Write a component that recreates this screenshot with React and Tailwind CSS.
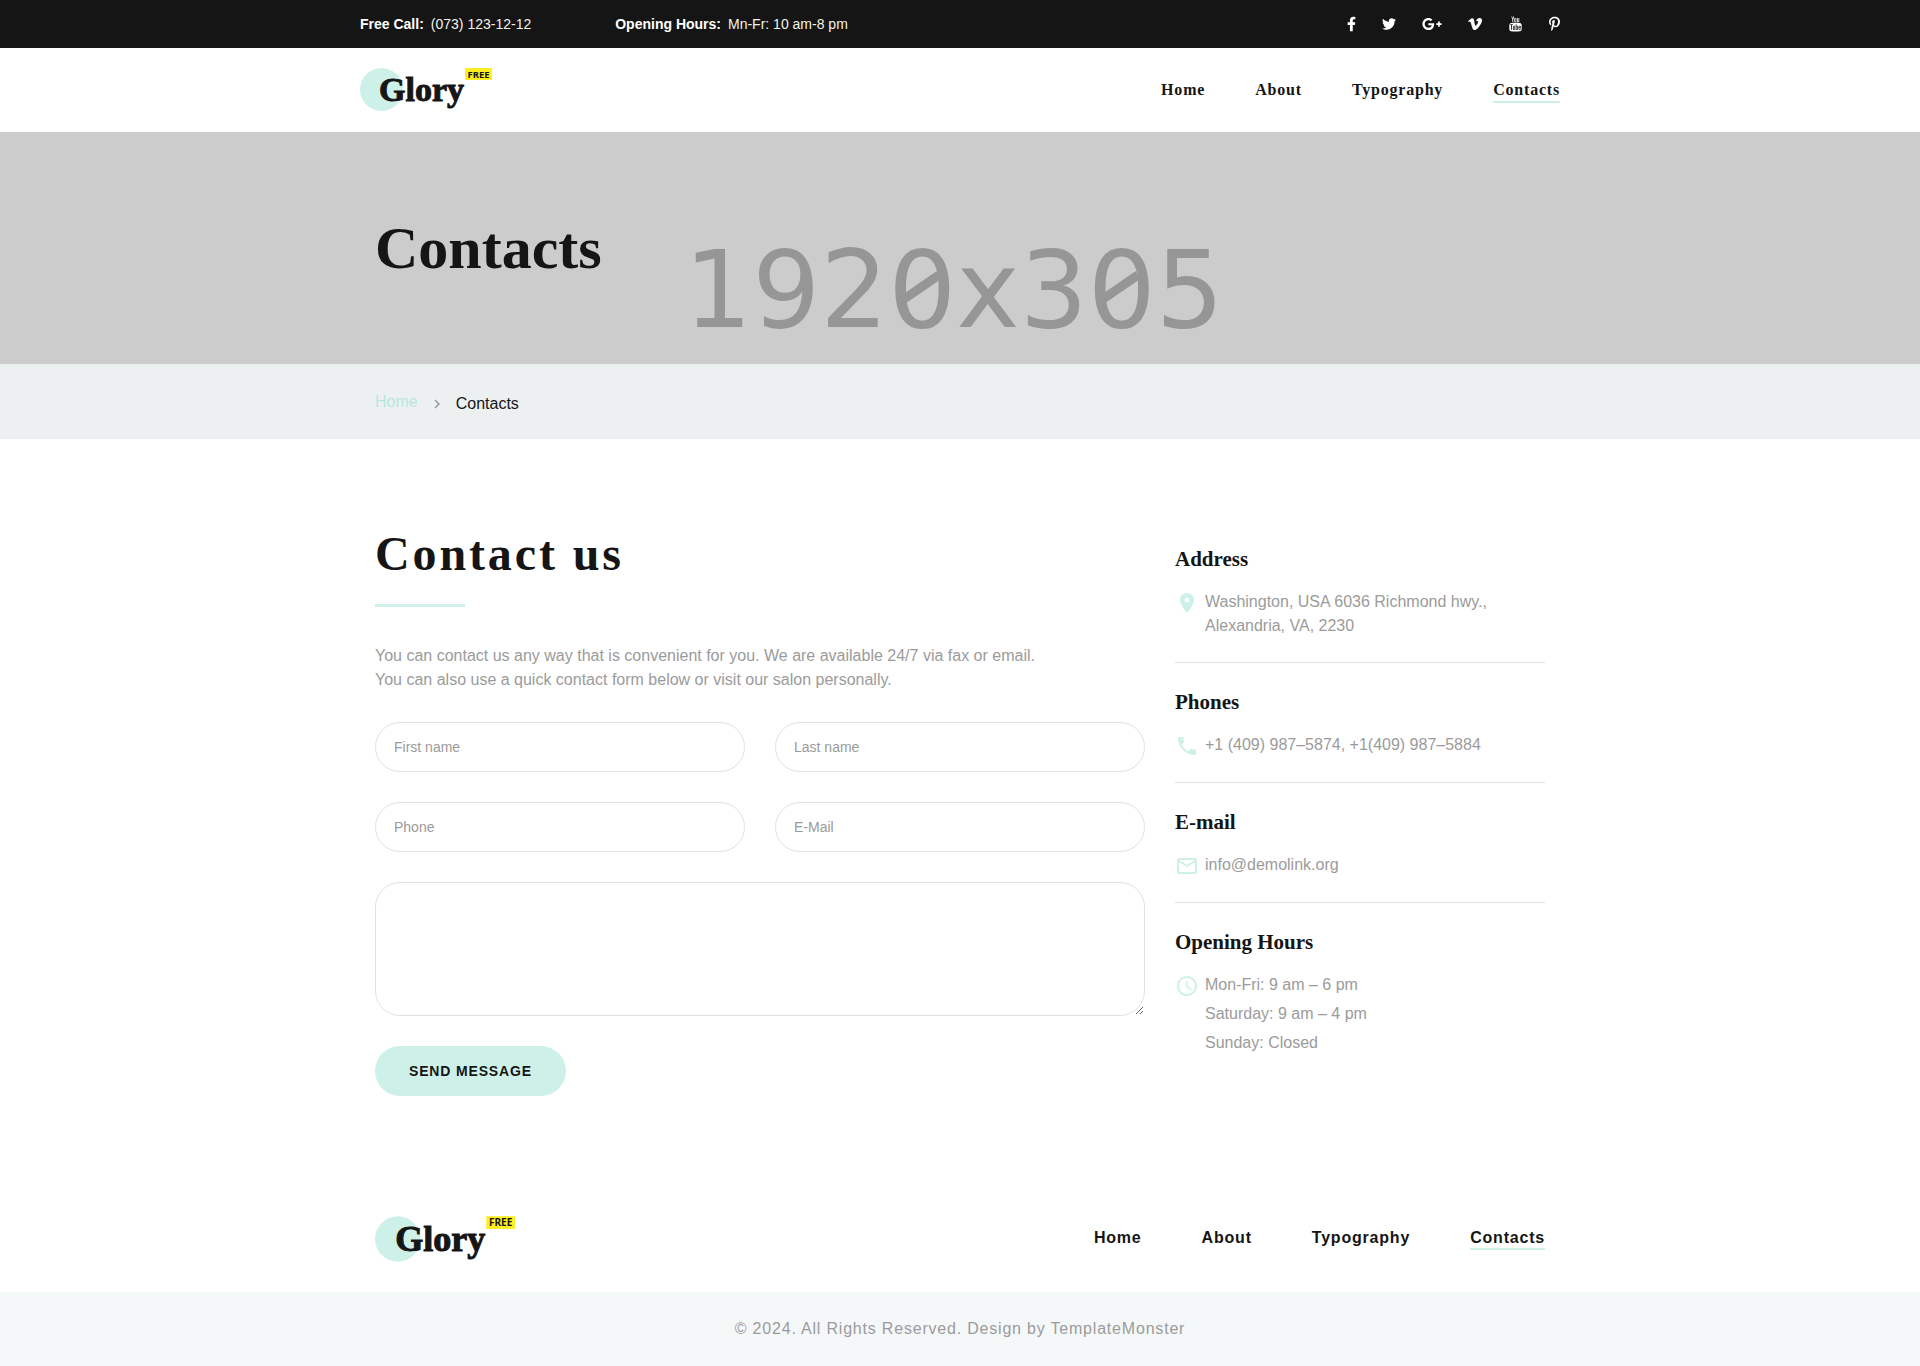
import React, { useState } from "react";
import { FaFacebookF, FaTwitter, FaGooglePlusG, FaVimeoV, FaPinterestP } from "react-icons/fa";
import { TfiYoutube } from "react-icons/tfi";
import { MdPlace, MdPhone, MdMailOutline, MdAccessTime, MdChevronRight } from "react-icons/md";

const pages = ["Home", "About", "Typography", "Contacts"];

const socials = [
  { name: "Facebook", icon: FaFacebookF, size: "w-[9px] h-4" },
  { name: "Twitter", icon: FaTwitter, size: "w-[14px] h-4" },
  { name: "Google Plus", icon: FaGooglePlusG, size: "w-5 h-5" },
  { name: "Vimeo", icon: FaVimeoV, size: "w-[14px] h-4" },
  { name: "YouTube", icon: TfiYoutube, size: "w-[15px] h-4" },
  { name: "Pinterest", icon: FaPinterestP, size: "w-[11px] h-4" },
];

const fields = [
  { id: "first-name", label: "First name", type: "text" },
  { id: "last-name", label: "Last name", type: "text" },
  { id: "phone", label: "Phone", type: "tel" },
  { id: "email", label: "E-Mail", type: "email" },
];

function Logo({ className }) {
  return (
    <a href="#home" aria-label="Glory">
      <svg viewBox="0 0 133 43" className={className}>
        <circle cx="21.5" cy="21.5" r="21.5" fill="#cdf1e8" />
        <text x="19" y="33" fontSize="34" fontWeight="700" fontFamily="'Liberation Serif', serif" fill="#151515" stroke="#151515" strokeWidth="1">
          Glory
        </text>
        <rect x="105" width="27" height="12" fill="#fcee21" />
        <text x="118.5" y="9.5" fontSize="9.5" fontWeight="700" fontFamily="'Noto Sans', sans-serif" textAnchor="middle" fill="#151515">
          FREE
        </text>
      </svg>
    </a>
  );
}

function Nav({ label, className }) {
  return (
    <nav aria-label={label} className={className}>
      {pages.map((page) => (
        <a
          key={page}
          href={`#${page.toLowerCase()}`}
          className={
            page === "Contacts"
              ? "border-b-2 border-[#cdf1e8]"
              : "border-b-2 border-transparent hover:border-[#cdf1e8]"
          }
        >
          {page}
        </a>
      ))}
    </nav>
  );
}

function InfoBlock({ title, icon: Icon, last, children }) {
  return (
    <section className={last ? "" : "mb-[25px] border-b border-[#e1e1e1] pb-6"}>
      <h2 className="font-['Liberation_Serif',serif] text-[21px] leading-7 font-bold text-[#151515]">{title}</h2>
      <div className="mt-[17px] flex gap-[6px]">
        <Icon className="mt-px h-6 w-6 shrink-0 text-[#cdf1e8]" />
        <div>{children}</div>
      </div>
    </section>
  );
}

function ContactForm() {
  const [values, setValues] = useState({});
  const update = (e) => setValues({ ...values, [e.target.name]: e.target.value });

  return (
    <form className="mt-[30px] grid grid-cols-1 gap-[30px] md:grid-cols-2" onSubmit={(e) => e.preventDefault()}>
      {fields.map((field) => (
        <input
          key={field.id}
          id={field.id}
          name={field.id}
          type={field.type}
          placeholder={field.label}
          aria-label={field.label}
          value={values[field.id] || ""}
          onChange={update}
          className="h-[50px] w-full rounded-[25px] border border-[#e1e1e1] px-[18px] text-sm text-[#151515] placeholder:text-[#9b9b9b] focus:outline-none"
        />
      ))}
      <textarea
        id="message"
        name="message"
        aria-label="Message"
        value={values.message || ""}
        onChange={update}
        className="h-[134px] w-full rounded-[25px] border border-[#e1e1e1] px-[18px] py-3 text-sm text-[#151515] focus:outline-none md:col-span-2"
      />
      <div className="md:col-span-2">
        <button
          type="submit"
          className="h-[50px] rounded-[25px] bg-[#cdf1e8] px-[34px] text-sm font-bold tracking-[0.06em] text-[#151515] uppercase"
        >
          Send message
        </button>
      </div>
    </form>
  );
}

function App() {
  return (
    <div className="bg-white font-['Liberation_Sans',sans-serif] text-base leading-6 text-[#9b9b9b]">
      <header>
        <div className="bg-[#151515] text-sm text-[#f3f3e9]">
          <div className="mx-auto flex h-12 max-w-[1200px] items-center justify-between">
            <dl className="flex gap-[84px]">
              <div className="flex gap-[7px]">
                <dt className="font-bold text-white">Free Call:</dt>
                <dd>(073) 123-12-12</dd>
              </div>
              <div className="flex gap-[7px]">
                <dt className="font-bold text-white">Opening Hours:</dt>
                <dd>Mn-Fr: 10 am-8 pm</dd>
              </div>
            </dl>
            <div className="flex items-center gap-[26px] text-white">
              {socials.map(({ name, icon: Icon, size }) => (
                <a key={name} href={`#${name}`} aria-label={name}>
                  <Icon className={size} />
                </a>
              ))}
            </div>
          </div>
        </div>
        <div className="mx-auto flex h-[84px] max-w-[1200px] items-start justify-between pt-5">
          <Logo className="h-[43px] w-[133px]" />
          <Nav
            label="Main"
            className="flex gap-[50px] pt-[11px] font-['Liberation_Serif',serif] leading-[22px] font-bold tracking-wider text-[#151515]"
          />
        </div>
      </header>

      <div className="relative h-[232px] overflow-hidden bg-[#ccc]">
        <svg viewBox="0 0 600 232" className="absolute inset-0 mx-auto h-full w-[600px]" aria-hidden="true">
          <text x="294" y="195" fontSize="107" textAnchor="middle" fontFamily="'DejaVu Sans', sans-serif" fill="#969696">
            1920x305
          </text>
          {/* slashes of the zeros */}
          <path d="M244 167l35-24M443 167l35-24" stroke="#969696" strokeWidth="9" />
        </svg>
        <div className="relative mx-auto max-w-[1200px] px-[15px] pt-[81px]">
          <h1 className="font-['Liberation_Serif',serif] text-6xl leading-[70px] font-bold text-[#151515]">Contacts</h1>
        </div>
      </div>

      <div className="bg-[#ecf0f1]">
        <nav aria-label="Breadcrumb" className="mx-auto flex max-w-[1200px] items-end px-[15px] pt-6 pb-[23px]">
          <a href="#home" className="leading-7 text-[#b3e8db]">Home</a>
          <MdChevronRight className="mx-[10px] mb-[3px] h-[18px] w-[18px]" />
          <span className="text-[#151515]">Contacts</span>
        </nav>
      </div>

      <main className="mx-auto grid max-w-[1200px] grid-cols-1 gap-[30px] px-[15px] pt-[87px] pb-[120px] lg:grid-cols-3">
        <div className="lg:col-span-2">
          <h2 className="font-['Liberation_Serif',serif] text-5xl leading-14 font-bold tracking-[0.06em] text-[#151515]">Contact us</h2>
          <div className="mt-[22px] h-[3px] w-[90px] bg-[#cdf1e8]" />
          <p className="mt-[37px] max-w-[670px]">
            You can contact us any way that is convenient for you. We are available 24/7 via fax or email. You can also
            use a quick contact form below or visit our salon personally.
          </p>
          <ContactForm />
        </div>
        <aside className="pt-[19px]">
          <InfoBlock title="Address" icon={MdPlace}>
            <p className="max-w-[300px]">Washington, USA 6036 Richmond hwy., Alexandria, VA, 2230</p>
          </InfoBlock>
          <InfoBlock title="Phones" icon={MdPhone}>
            <a href="tel:+14099875874">+1 (409) 987–5874</a>, <a href="tel:+14099875884">+1(409) 987–5884</a>
          </InfoBlock>
          <InfoBlock title="E-mail" icon={MdMailOutline}>
            <a href="mailto:info@demolink.org">info@demolink.org</a>
          </InfoBlock>
          <InfoBlock title="Opening Hours" icon={MdAccessTime} last>
            <ul className="flex flex-col gap-[5px]">
              <li>Mon-Fri: 9 am – 6 pm</li>
              <li>Saturday: 9 am – 4 pm</li>
              <li>Sunday: Closed</li>
            </ul>
          </InfoBlock>
        </aside>
      </main>

      <footer>
        <div className="mx-auto flex max-w-[1200px] items-center justify-between px-[15px] pb-[30px]">
          <Logo className="h-[46px] w-[141px]" />
          <Nav label="Footer" className="flex gap-[60px] leading-5 font-bold tracking-wider text-[#151515]" />
        </div>
        <div className="bg-[#f5f8f9] px-[15px] py-[25px] text-center tracking-wider">
          <p>© 2024. All Rights Reserved. Design by TemplateMonster</p>
        </div>
      </footer>
    </div>
  );
}

export default App;
